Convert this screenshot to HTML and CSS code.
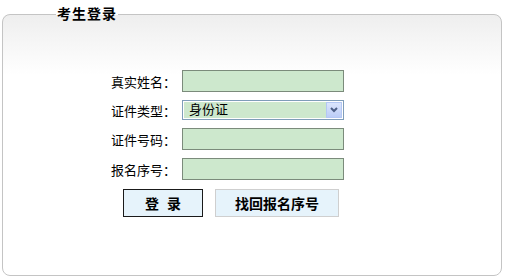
FILE: index.html
```html
<!DOCTYPE html>
<html lang="zh-CN">
<head>
    <meta charset="UTF-8">
    <title>考生登录</title>
    <link rel="stylesheet" href="styles.css">
</head>
<body>

    <!-- Login Box -->
    <fieldset class="login-box">
        <legend class="login-title">考生登录</legend>

        <form class="login-form" onsubmit="return false;">
            <label class="field-label" for="realName">真实姓名：</label>
            <input class="field-input" type="text" id="realName">

            <label class="field-label" for="idType">证件类型：</label>
            <div class="select-wrap">
                <select class="field-select" id="idType">
                    <option>身份证</option>
                    <option>军官证</option>
                    <option>护照</option>
                </select>
                <span class="select-arrow">
                    <svg width="8" height="6" viewBox="0 0 8 6">
                        <path d="M1 1 L4 4 L7 1" fill="none" stroke="#4d5f86" stroke-width="2"/>
                    </svg>
                </span>
            </div>

            <label class="field-label" for="idNumber">证件号码：</label>
            <input class="field-input" type="text" id="idNumber">

            <label class="field-label" for="regNumber">报名序号：</label>
            <input class="field-input" type="text" id="regNumber">

            <div class="btn-row">
                <button class="login-btn" type="submit">登&nbsp;&nbsp;录</button>
                <button class="find-btn" type="button">找回报名序号</button>
            </div>
        </form>
    </fieldset>

</body>
</html>
```

FILE: styles.css
```css
/* General Styling */
body {
    margin: 0;
    font-family: "Liberation Sans", "Noto Sans CJK SC", sans-serif;
    font-size: 13px;
    color: #000;
    background-color: #fff;
}

/* Login Box */
.login-box {
    margin: 4px 4px 0 2px;
    padding: 46px 0 58px 0;
    border: 1px solid #c4c4c4;
    border-radius: 8px;
    background: linear-gradient(#eeeeee, #ffffff 60px);
    min-inline-size: 0;
}

.login-title {
    margin-left: 53px;
    padding: 0 1px;
    font-size: 14px;
    font-weight: bold;
    line-height: 20px;
    letter-spacing: 1px;
}

/* Form Styling */
.login-form {
    display: grid;
    grid-template-columns: 80px 162px;
    column-gap: 6px;
    row-gap: 8px;
    align-items: center;
    margin-left: 93px;
}

.field-label {
    text-align: right;
    white-space: nowrap;
}

.field-input {
    box-sizing: border-box;
    height: 22px;
    width: 162px;
    margin: 0;
    padding: 1px 4px;
    border: 1px solid #7b8b7b;
    background-color: #cde8cd;
    font-size: 13px;
}

/* Select Styling */
.select-wrap {
    position: relative;
    box-sizing: border-box;
    width: 162px;
    height: 20px;
    border: 1px solid #7f9db9;
    background-color: #fff;
    padding: 1px;
}

.field-select {
    appearance: none;
    -webkit-appearance: none;
    display: block;
    width: 100%;
    height: 16px;
    margin: 0;
    padding: 0 0 0 5px;
    border: none;
    outline: none;
    background-color: #cde8cd;
    font-family: "Liberation Sans", "Noto Sans CJK SC", sans-serif;
    font-size: 13px;
    line-height: 16px;
}

.select-arrow {
    position: absolute;
    top: 1px;
    right: 1px;
    box-sizing: border-box;
    width: 16px;
    height: 16px;
    border: 1px solid #b4c8f4;
    background: linear-gradient(#dbe5fd, #bccdf7);
    display: flex;
    align-items: center;
    justify-content: center;
    pointer-events: none;
}

/* Button Styling */
.btn-row {
    grid-column: 1 / -1;
    display: flex;
    gap: 12px;
    padding-left: 27px;
    margin-top: 1px;
}

.login-btn, .find-btn {
    height: 28px;
    margin: 0;
    background-color: #e6f3fb;
    font-family: "Liberation Sans", "Noto Sans CJK SC", sans-serif;
    font-size: 14px;
    font-weight: bold;
    color: #000;
    cursor: pointer;
}

.login-btn {
    width: 80px;
    border: 1px solid #1a1a1a;
}

.find-btn {
    width: 124px;
    border: 1px solid #cfcfcf;
}
```
